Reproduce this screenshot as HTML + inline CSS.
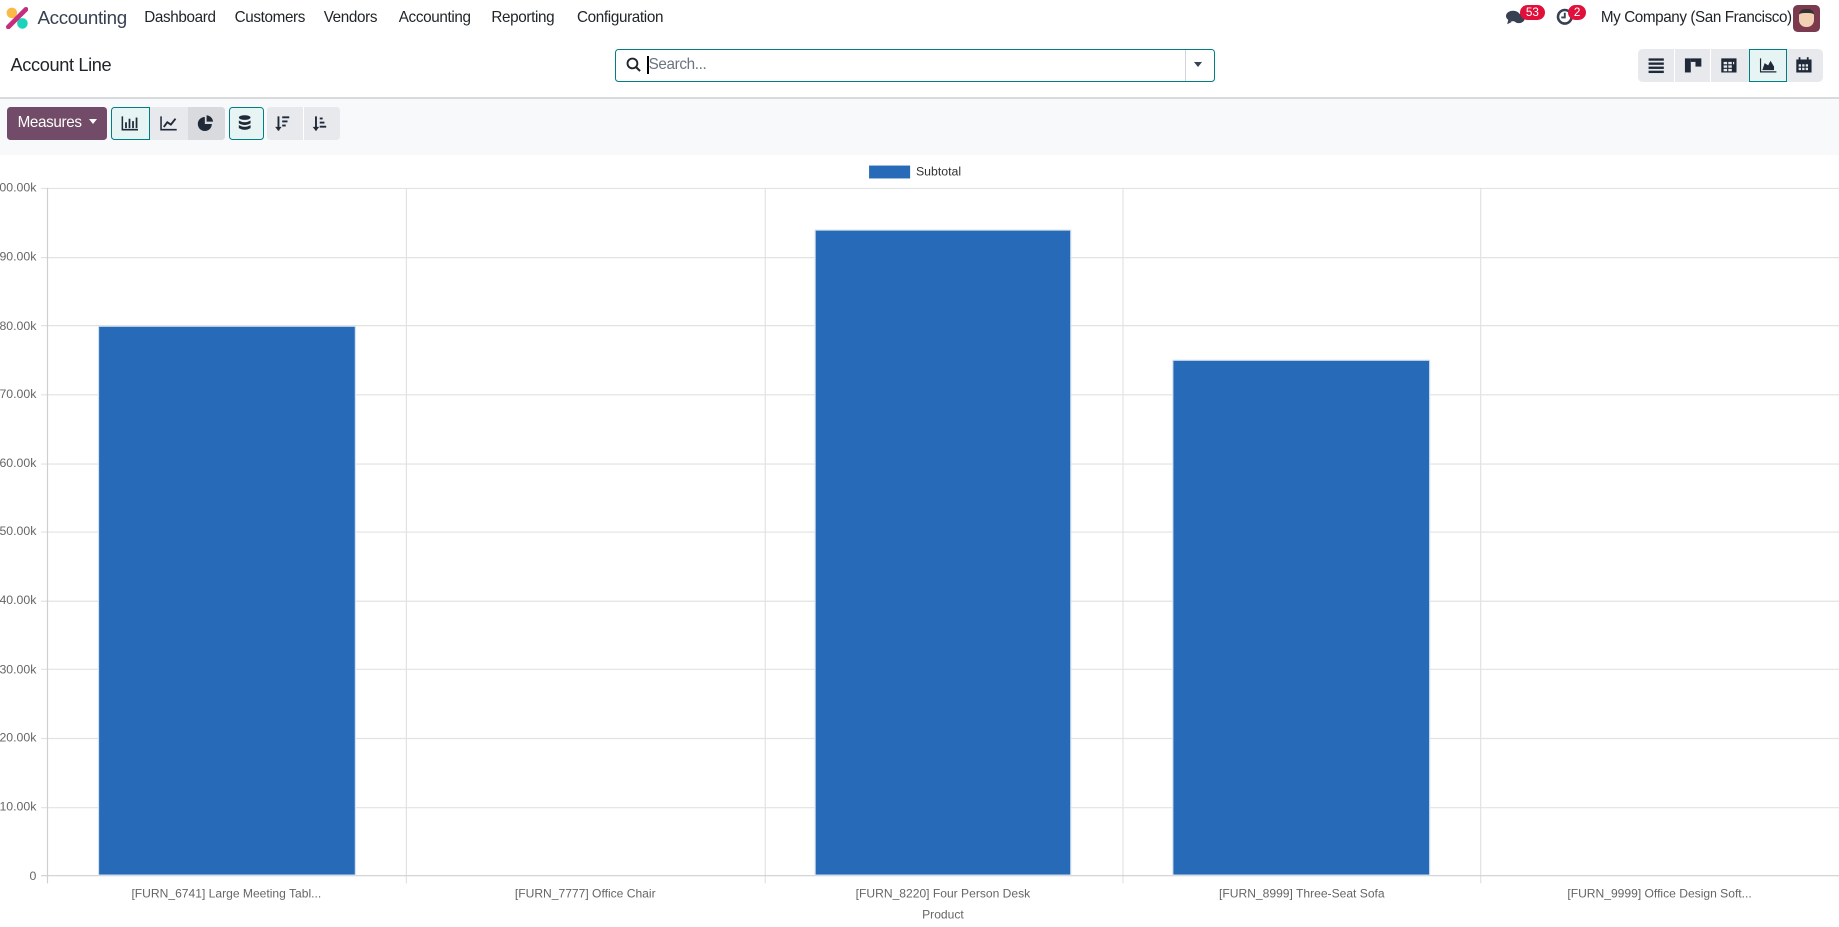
<!DOCTYPE html>
<html><head><meta charset="utf-8"><style>
*{box-sizing:border-box;margin:0;padding:0}
html,body{width:1839px;height:927px;overflow:hidden;background:#fff}
#w{zoom:1.17283;width:1568px;height:790px;position:relative;font-family:"Liberation Sans",sans-serif;color:#374151}
.a{position:absolute;white-space:nowrap}
.nav{font-size:13px;color:#212529;top:8px;letter-spacing:-0.3px}
.btn{position:absolute;height:28px;background:#e7e9ed;border-radius:0}
.act{background:#e6f4f4;border:1px solid #017e84}
svg text{font-family:"Liberation Sans",sans-serif}
</style></head><body><div id="w">
<!-- navbar -->
<svg class="a" style="left:5px;top:6px" width="19" height="19" viewBox="0 0 19 19"><circle cx="5" cy="5" r="4.5" fill="#fbb945"/><circle cx="14" cy="14" r="4.5" fill="#1ad3bb"/><path d="M2 17L17 2" stroke="#c62e7d" stroke-width="4" stroke-linecap="round"/></svg>
<div class="a" style="left:32px;top:6px;font-size:16px;color:#374151;letter-spacing:-0.3px">Accounting</div>
<div class="a nav" style="left:123px">Dashboard</div>
<div class="a nav" style="left:200px">Customers</div>
<div class="a nav" style="left:276px">Vendors</div>
<div class="a nav" style="left:340px">Accounting</div>
<div class="a nav" style="left:419px">Reporting</div>
<div class="a nav" style="left:492px">Configuration</div>
<svg class="a" style="left:1284px;top:8px" width="17" height="14" viewBox="0 0 17 14"><ellipse cx="6" cy="6" rx="6" ry="4.5" fill="#374151"/><path d="M2 9l-1 4 4-2z" fill="#374151"/><ellipse cx="11" cy="8" rx="5" ry="4" fill="#374151"/></svg>
<div class="a" style="left:1296px;top:4px;background:#e0103b;color:#fff;font-size:10px;border-radius:8px;padding:1px 5px">53</div>
<svg class="a" style="left:1327px;top:7px" width="15" height="15" viewBox="0 0 15 15"><circle cx="7.5" cy="7.5" r="5.8" fill="none" stroke="#374151" stroke-width="2.2"/><path d="M7.5 4v4h-3" stroke="#374151" stroke-width="1.6" fill="none"/></svg>
<div class="a" style="left:1337px;top:4px;background:#e0103b;color:#fff;font-size:10px;border-radius:8px;padding:1px 5px">2</div>
<div class="a" style="left:1365px;top:8px;font-size:13px;color:#212529;letter-spacing:-0.35px">My Company (San Francisco)</div>
<div class="a" style="left:1529px;top:4px;width:23px;height:23px;border-radius:4px;background:#7b3a4e"><div style="margin:4px 5px;width:13px;height:15px;background:#f2d0b4;border-radius:5px 5px 6px 6px;border-top:4px solid #333"></div></div>
<!-- control panel -->
<div class="a" style="left:9px;top:47px;font-size:15.5px;color:#212529;letter-spacing:-0.3px">Account Line</div>
<div class="a" style="left:524px;top:42px;width:512px;height:28px;border:1px solid #017e84;border-radius:3px"></div>
<svg class="a" style="left:534px;top:49px" width="13" height="13" viewBox="0 0 13 13"><circle cx="5.5" cy="5.5" r="4.2" fill="none" stroke="#212529" stroke-width="1.6"/><path d="M8.5 8.5l3.5 3.5" stroke="#212529" stroke-width="1.8"/></svg>
<div class="a" style="left:552px;top:48px;width:1px;height:15px;background:#000"></div>
<div class="a" style="left:553px;top:48px;font-size:13px;color:#6b7280;letter-spacing:-0.3px">Search...</div>
<div class="a" style="left:1010px;top:43px;width:1px;height:26px;background:#d1d5db"></div>
<div class="a" style="left:1018px;top:53px;border:4px solid transparent;border-top:5px solid #374151"></div>
<div class="a" style="left:1397px;top:42px;width:157px;height:28px;background:#e7e9ed;border-radius:4px"></div>
<div class="btn act" style="left:1491px;top:42px;width:33px;height:28px"></div>
<div class="a" style="left:1427px;top:42px;width:1px;height:28px;background:#fff"></div>
<div class="a" style="left:1458px;top:42px;width:1px;height:28px;background:#fff"></div>
<svg class="a" style="left:1397px;top:42px" width="157" height="28" viewBox="0 0 157 28">
<g fill="#1f2937"><rect x="9" y="8" width="13" height="2"/><rect x="9" y="11.5" width="13" height="2"/><rect x="9" y="15" width="13" height="2"/><rect x="9" y="18.5" width="13" height="2"/>
<rect x="40" y="8" width="5" height="12"/><rect x="45" y="8" width="4" height="3"/><rect x="49" y="8" width="5" height="7"/>
<path d="M71 8h13v12h-13z M73 11v2h3v-2z M77 11v2h3v-2z M81 11v2h1v-2z M73 14v2h3v-2z M77 14v2h3v-2z M73 17v2h3v-2z M77 17v2h3v-2z" fill-rule="evenodd"/>
<path d="M104 8v12h14v-1h-13v-11z M106 18l2-6 3 2 2-4 3 5v3z"/>
<path d="M135 9h13v11h-13z M137 13v2h2v-2z M140 13v2h2v-2z M143 13v2h2v-2z M137 16v2h2v-2z M140 16v2h2v-2z M143 16v2h2v-2z" fill-rule="evenodd"/><rect x="137" y="7" width="1.5" height="3"/><rect x="144" y="7" width="1.5" height="3"/></g></svg>
<div class="a" style="left:0;top:83px;width:1568px;height:1px;background:#d8dadd"></div>
<div class="a" style="left:0;top:84px;width:1568px;height:48px;background:#f8f9fa"></div>
<!-- toolbar -->
<div class="a" style="left:6px;top:91px;width:85px;height:28px;background:#714b67;border-radius:3px;color:#fff;font-size:13px;padding:6px 0 0 9px;letter-spacing:-0.3px">Measures<span style="display:inline-block;border:4px solid transparent;border-top:5px solid #fff;margin-left:6px;vertical-align:-1px"></span></div>
<div class="btn" style="left:95px;top:91px;width:97px;border-radius:3px"></div>
<div class="btn" style="left:160px;top:91px;width:32px;background:#d8dadd;border-radius:0 3px 3px 0"></div>
<div class="btn act" style="left:95px;top:91px;width:33px;border-radius:3px 0 0 3px"></div>
<div class="btn act" style="left:195px;top:91px;width:30px;border-radius:3px"></div>
<div class="btn" style="left:228px;top:91px;width:62px;border-radius:3px"></div>
<div class="a" style="left:258px;top:91px;width:1px;height:28px;background:#fff"></div>
<svg class="a" style="left:95px;top:91px" width="200" height="28" viewBox="0 0 200 28"><g fill="#1f2937">
<path d="M9 8v12h14v-1.3h-12.7v-10.7z"/><rect x="12" y="13" width="1.5" height="5"/><rect x="15" y="10" width="1.5" height="8"/><rect x="18" y="12" width="1.5" height="6"/><rect x="21" y="9" width="1.5" height="9"/>
<path d="M42 8v12h14v-1.3h-12.7v-10.7z"/><path d="M45 17l3-4 3 2 4-5" stroke="#1f2937" stroke-width="1.6" fill="none"/>
<path d="M80 8.5a6 6 0 1 0 6 6h-6z"/><path d="M81.5 7a6 6 0 0 1 5.5 5.5h-5.5z"/>
<ellipse cx="114" cy="9" rx="5" ry="2"/><path d="M109 11.5q5 3 10 0v2.5q-5 3-10 0z"/><path d="M109 15.5q5 3 10 0v2.5q-5 3-10 0z"/>
<rect x="142" y="8" width="1.6" height="12"/><path d="M140 17h5.5l-2.75 3.5z"/><rect x="146" y="8" width="6" height="1.6"/><rect x="146" y="11.5" width="4.5" height="1.6"/><rect x="146" y="15" width="3" height="1.6"/>
<rect x="174" y="8" width="1.6" height="12"/><path d="M172 17h5.5l-2.75 3.5z"/><rect x="178" y="9" width="2.5" height="1.6"/><rect x="178" y="12.5" width="4" height="1.6"/><rect x="178" y="16" width="5.5" height="1.6"/>
</g></svg>
<!-- chart -->
<svg class="a" style="left:0;top:132px" width="1568" height="658" viewBox="0 132 1568 658">
<rect x="741" y="141" width="35" height="11" fill="#276bb8"/>
<text x="781" y="149.5" font-size="10.5" fill="#333">Subtotal</text>
<g stroke="#e2e2e2" stroke-width="1">
<line x1="35" y1="160.5" x2="1568" y2="160.5"/><line x1="35" y1="219.5" x2="1568" y2="219.5"/><line x1="35" y1="277.5" x2="1568" y2="277.5"/><line x1="35" y1="336.5" x2="1568" y2="336.5"/><line x1="35" y1="395.5" x2="1568" y2="395.5"/><line x1="35" y1="453.5" x2="1568" y2="453.5"/><line x1="35" y1="512.5" x2="1568" y2="512.5"/><line x1="35" y1="570.5" x2="1568" y2="570.5"/><line x1="35" y1="629.5" x2="1568" y2="629.5"/><line x1="35" y1="688.5" x2="1568" y2="688.5"/>
<line x1="346.5" y1="160" x2="346.5" y2="753"/><line x1="652.5" y1="160" x2="652.5" y2="753"/><line x1="957.5" y1="160" x2="957.5" y2="753"/><line x1="1262.5" y1="160" x2="1262.5" y2="753"/></g>
<g stroke="#cfcfcf"><line x1="40.5" y1="160" x2="40.5" y2="753"/><line x1="35" y1="746.5" x2="1568" y2="746.5"/></g>
<g fill="#276bb8" stroke="#d6e2ef" stroke-width="1"><rect x="84" y="278" width="219" height="468"/><rect x="695" y="196" width="218" height="550"/><rect x="1000" y="307" width="219" height="439"/></g>
<g font-size="10.5" fill="#666" text-anchor="end">
<text x="31" y="163">100.00k</text><text x="31" y="222">90.00k</text><text x="31" y="281">80.00k</text><text x="31" y="339">70.00k</text><text x="31" y="398">60.00k</text><text x="31" y="456">50.00k</text><text x="31" y="515">40.00k</text><text x="31" y="574">30.00k</text><text x="31" y="632">20.00k</text><text x="31" y="691">10.00k</text><text x="31" y="750">0</text></g>
<g font-size="10.3" fill="#666" text-anchor="middle">
<text x="193" y="765">[FURN_6741] Large Meeting Tabl...</text><text x="499" y="765">[FURN_7777] Office Chair</text><text x="804" y="765">[FURN_8220] Four Person Desk</text><text x="1110" y="765">[FURN_8999] Three-Seat Sofa</text><text x="1415" y="765">[FURN_9999] Office Design Soft...</text>
<text x="804" y="783">Product</text></g>
</svg>
</div></body></html>
